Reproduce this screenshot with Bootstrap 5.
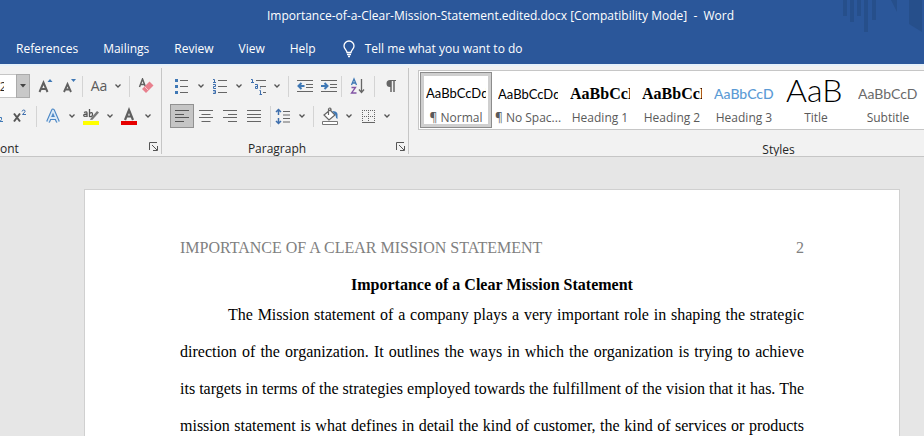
<!DOCTYPE html>
<html lang="en">
<head>
<meta charset="utf-8">
<meta name="viewport" content="width=device-width, initial-scale=1">
<title>Importance-of-a-Clear-Mission-Statement.edited.docx - Word</title>
<link href="https://cdn.jsdelivr.net/npm/bootstrap@5.3.0/dist/css/bootstrap.min.css" rel="stylesheet">
<style>
  body { font: 12px/16px "Open Sans", "Noto Sans", sans-serif; background: #e6e6e6; color: #262626; }
  button { font: inherit; color: inherit; background: none; border: 0; padding: 0; }
  svg { display: block; flex: none; fill: none; }
  .app-head { background: #2b579a; color: #fff; height: 64px; }
  .doc-title { padding: 8px 0 0 77px; height: 33px; }
  .head-art { position: absolute; top: 0; right: 0; }
  .menu-tabs { height: 31px; padding-left: 16px; gap: 25px; }
  .menu-tabs a { color: #fff; }
  .ribbon { background: #f2f2f2; height: 93px; border-top: 2px solid #e6f1fa; border-bottom: 1px solid #c6c6c6; }
  .group { border-right: 1px solid #c6c6c6; margin: 2px 0 2px; flex: none; }
  .group-font { width: 162px; }
  .group-para { width: 247px; }
  .group-styles { width: 740px; }
  .tool-row { height: 32px; }
  .tool { width: 24px; height: 24px; display: flex; align-items: center; justify-content: center; flex: none; }
  .tool.on { background: #c5c5c5; border: 1px solid #919191; }
  .split { width: 38px; height: 24px; display: flex; align-items: center; flex: none; }
  .split > span { width: 24px; display: flex; justify-content: center; }
  .case-mark { font-size: 14px; font-weight: 500; color: #5a5a5a; }
  .rule { width: 1px; height: 21px; background: #d4d4d4; flex: none; }
  .size-box { width: 24px; height: 24px; margin-left: -8px; padding: 0 12px 0 0; border: 1px solid #c6c6c6; border-right: 0; text-align: right; color: #262626; background: #fff; }
  .size-drop { width: 14px; height: 24px; background: #c8c8c8; border: 1px solid #ababab; display: flex; align-items: center; justify-content: center; }
  .caption-row { height: 22px; padding-top: 9px; }
  .launcher { position: absolute; right: 3px; top: 10px; }
  .gallery { margin: 2px 0 0 9px; height: 60px; border: 1px solid #c6c6c6; background: #fff; padding: 1px; }
  .style-cell { width: 72px; height: 56px; padding: 6px 6px 0; flex: none; text-align: left; color: #5a5a5a; }
  .style-cell.on { border: 1px solid #8c8c8c; box-shadow: inset 0 0 0 3px #cfcfcf; padding: 5px 5px 0; }
  .sample { display: flex; align-items: center; height: 27px; overflow: hidden; white-space: nowrap; color: #000; font-family: Lato, "Open Sans", sans-serif; font-size: 13px; }
  .sample.serif { font: bold 16px "Liberation Serif", serif; }
  .sample.blue { color: #5b9bd5; font-size: 14px; font-weight: 500; }
  .sample.huge { font-weight: 300; font-size: 32px; line-height: 20px; align-items: flex-start; }
  .sample.soft { color: #6a6a6a; font-size: 14px; }
  .style-name { display: block; text-align: center; white-space: nowrap; margin: 3px -4px 0; }
  .workspace { padding: 33px 25px 0 85px; }
  .sheet { background: #fff; box-shadow: 0 0 0 1px #d0d0d0; padding: 48px 95px 0; font: 16px/20px "Liberation Serif", serif; color: #000; }
  .running-head { color: #808080; margin-bottom: 17px; }
  .sheet h1 { font: bold 16px/20px "Liberation Serif", serif; margin: 0; text-align: center; }
  .sheet p { line-height: 37px; text-indent: 48px; text-align: justify; text-align-last: justify; margin: 1px 0 0; }
</style>
</head>
<body class="vh-100 overflow-hidden d-flex flex-column">
<header class="app-head position-relative flex-shrink-0">
  <svg class="head-art" width="90" height="34" viewBox="0 0 90 34">
    <g fill="#264f8b"><path d="M9 0h4v16H9zM16 0h4v22h-4zM23 0h4v16h-4zM30 0h4v32h-4zM38 0h4v20h-4zM57 0h6v12z"/><path d="M75 0h13v32L75 24z"/></g>
  </svg>
  <div class="doc-title text-center">Importance-of-a-Clear-Mission-Statement.edited.docx [Compatibility Mode]&nbsp; -&nbsp; Word</div>
  <nav class="menu-tabs d-flex align-items-center">
    <a class="text-decoration-none" href="#">References</a>
    <a class="text-decoration-none" href="#">Mailings</a>
    <a class="text-decoration-none" href="#">Review</a>
    <a class="text-decoration-none" href="#">View</a>
    <a class="text-decoration-none" href="#">Help</a>
    <a class="text-decoration-none d-flex align-items-center gap-2" href="#">
      <svg width="16" height="18" viewBox="0 0 16 18" stroke="#fff" stroke-width="1.3"><path d="M6 12.500C6 10 3 9 3 6a5 5 0 0 1 10 0c0 3-3 4-3 6.500zM6 14.500h4M7 16.500h2"/></svg>
      <span>Tell me what you want to do</span></a>
  </nav>
</header>

<section class="ribbon d-flex overflow-hidden flex-shrink-0" aria-label="Ribbon">
  <div class="group group-font">
    <div class="tool-row d-flex align-items-center pt-1">
      <input class="size-box rounded-0" type="text" value="12" aria-label="Font size">
      <button class="size-drop" aria-label="Font size list"><svg width="8" height="4" viewBox="0 0 8 4"><path d="M1 0h6L4 3.500z" fill="#444"/></svg></button>
      <button class="tool ms-1" aria-label="Grow font"><svg width="16" height="16" viewBox="0 0 16 16"><path d="M1.500 14 5.500 4.500 9.500 14M3 11h5" stroke="#606060" stroke-width="2"/><path d="M9.500 4 12 1l2.500 3z" fill="#3f78b5"/></svg></button>
      <button class="tool" aria-label="Shrink font"><svg width="16" height="16" viewBox="0 0 16 16"><path d="M2 14 5.500 6 9 14M3.500 11.500h4" stroke="#606060" stroke-width="1.900"/><path d="M9 1h5l-2.500 3z" fill="#3f78b5"/></svg></button>
      <span class="rule"></span>
      <button class="split ms-1" aria-label="Change case"><span class="case-mark">Aa</span><svg width="14" height="8" viewBox="0 0 14 8"><path d="M4.500 2.500 7 5l2.500-2.500" stroke="#555" stroke-width="1.300"/></svg></button>
      <span class="rule ms-1"></span>
      <button class="tool ms-1" aria-label="Clear formatting"><svg width="16" height="16" viewBox="0 0 16 16"><path d="M1.500 9 4.500 1l3 8M2.500 6.500h4" stroke="#606060" stroke-width="1.500"/><path d="m4 11 7.500-7.500 4 4L8 15z" fill="#e8808e"/><path d="m6.500 8.500 4 4" stroke="#f6c6cc"/></svg></button>
    </div>
    <div class="tool-row d-flex align-items-center">
      <svg width="8" height="16" viewBox="0 0 8 16"><path d="M0 9.500h1.500v2L0 13.500h3" stroke="#3f78b5"/></svg>
      <button class="tool" aria-label="Superscript"><svg width="16" height="16" viewBox="0 0 16 16"><path d="m2 5.500 6 8m0-8-6 8" stroke="#555" stroke-width="2"/><path d="M10 3.500q.3-1.500 1.800-1.500 1.700.2 1.200 1.700L10.500 6.500H14" stroke="#3f6fad"/></svg></button>
      <span class="rule ms-1"></span>
      <button class="split ms-1" aria-label="Text effects"><span><svg width="16" height="16" viewBox="0 0 16 16" stroke-linejoin="round"><path d="M3 14 8 2.500 13 14M5 10h6" stroke="#4a86c5" stroke-width="4"/><path d="M3 14 8 2.500 13 14M5 10h6" stroke="#dceaf7" stroke-width="1.800"/></svg></span><svg width="14" height="8" viewBox="0 0 14 8"><path d="M4.500 2.500 7 5l2.500-2.500" stroke="#555" stroke-width="1.300"/></svg></button>
      <button class="split" aria-label="Highlight"><span><svg width="18" height="18" viewBox="0 0 18 18"><path d="M2 5.500q3-1.500 3 .5v4M5 7q-3.500 0-3.300 1.500T5 9M7.500 2v8m0-3.500q3-2 3 .8T7.500 9.500" stroke="#555" stroke-width="1.300"/><path d="m9 11 6-7 2 1.500-6.500 7.200L8 13z" fill="#777"/><path d="M1 14h16v4H1z" fill="#ffff00"/></svg></span><svg width="14" height="8" viewBox="0 0 14 8"><path d="M4.500 2.500 7 5l2.500-2.500" stroke="#555" stroke-width="1.300"/></svg></button>
      <button class="split" aria-label="Font color"><span><svg width="18" height="18" viewBox="0 0 18 18"><path d="M5 13 9 3l4 10M6.500 9.500h5" stroke="#606060" stroke-width="2.200"/><path d="M1 14h16v4H1z" fill="#e60000"/></svg></span><svg width="14" height="8" viewBox="0 0 14 8"><path d="M4.500 2.500 7 5l2.500-2.500" stroke="#555" stroke-width="1.300"/></svg></button>
    </div>
    <div class="caption-row position-relative"><span class="d-block">ont</span>
      <button class="launcher" aria-label="Font settings"><svg width="9" height="9" viewBox="0 0 9 9" stroke="#555"><path d="M.5 8V.5H8M3 3l5 5M8.500 4v4.500H4"/></svg></button></div>
  </div>

  <div class="group group-para">
    <div class="tool-row d-flex align-items-center ps-2 pt-1">
      <button class="split" aria-label="Bullets"><span><svg width="16" height="16" viewBox="0 0 16 16"><path d="M1 1h3v3H1zM1 7h3v3H1zM1 13h3v3H1z" fill="#3f78b5"/><path d="M6 2.500h8M6 8.500h8M6 14.500h8" stroke="#666"/></svg></span><svg width="14" height="8" viewBox="0 0 14 8"><path d="M4.500 2.500 7 5l2.500-2.500" stroke="#555" stroke-width="1.300"/></svg></button>
      <button class="split" aria-label="Numbering"><span><svg width="16" height="16" viewBox="0 0 16 16"><path d="M1 1.500h1.500V4M1 4.500h3M1 6.500h2.500v2H1.500v2H4M1 12.500h2.500v3H1M1.500 14h2" stroke="#3f6fad"/><path d="M6 2.500h9M6 8.500h9M6 14.500h9" stroke="#666"/></svg></span><svg width="14" height="8" viewBox="0 0 14 8"><path d="M4.500 2.500 7 5l2.500-2.500" stroke="#555" stroke-width="1.300"/></svg></button>
      <button class="split" aria-label="Multilevel list"><span><svg width="17" height="17" viewBox="0 0 17 17"><path d="M1 1.500h1.500V4M1 4.500h3M5 6.500h2.500v4H5.500v-2h2M10.500 9.500v1M9.500 12.500h1V16M9.500 16.500h2.500" stroke="#3f6fad"/><path d="M6 2.500h10M10 8.500h6M13 14.500h3" stroke="#666"/></svg></span><svg width="14" height="8" viewBox="0 0 14 8"><path d="M4.500 2.500 7 5l2.500-2.500" stroke="#555" stroke-width="1.300"/></svg></button>
      <span class="rule ms-1"></span>
      <button class="tool ms-1" aria-label="Decrease indent"><svg width="16" height="14" viewBox="0 0 16 14"><path d="M0 1.500h16M9 5.500h7M9 8.500h7M0 12.500h16" stroke="#666"/><path d="M7.500 7h-6M4.500 4 1.500 7l3 3" stroke="#3f78b5" stroke-width="2"/></svg></button>
      <button class="tool" aria-label="Increase indent"><svg width="16" height="14" viewBox="0 0 16 14"><path d="M0 1.500h16M9 5.500h7M9 8.500h7M0 12.500h16" stroke="#666"/><path d="M0 7h6M3.500 4l3 3-3 3" stroke="#3f78b5" stroke-width="2"/></svg></button>
      <span class="rule"></span>
      <button class="tool ms-1" aria-label="Sort"><svg width="16" height="18" viewBox="0 0 16 18"><path d="m1.500 8 2.500-6 2.500 6M2.500 6h3" stroke="#3f78b5" stroke-width="1.300"/><path d="M1.500 10.500h4l-4 5.500h5" stroke="#8355a5" stroke-width="1.300"/><path d="M11.500 2v13M9 12.500l2.500 3 2.500-3" stroke="#666" stroke-width="1.300"/></svg></button>
      <span class="rule ms-1"></span>
      <button class="tool ms-1" aria-label="Show marks"><svg width="12" height="14" viewBox="0 0 12 14"><path d="M6 8H5a3.500 3.500 0 0 1 0-7h6v1H6z" fill="#666"/><path d="M6 1v12M9 1v12" stroke="#666" stroke-width="1.500"/></svg></button>
    </div>
    <div class="tool-row d-flex align-items-center ps-2">
      <button class="tool on" aria-label="Align left"><svg width="16" height="14" viewBox="0 0 16 14"><path d="M1 1.500h14M1 5.500h9M1 8.500h14M1 12.500h9" stroke="#555"/></svg></button>
      <button class="tool" aria-label="Center"><svg width="16" height="14" viewBox="0 0 16 14"><path d="M1 1.500h14M3.500 5.500h9M1 8.500h14M3.500 12.500h9" stroke="#666"/></svg></button>
      <button class="tool" aria-label="Align right"><svg width="16" height="14" viewBox="0 0 16 14"><path d="M1 1.500h14M6 5.500h9M1 8.500h14M6 12.500h9" stroke="#666"/></svg></button>
      <button class="tool" aria-label="Justify"><svg width="16" height="14" viewBox="0 0 16 14"><path d="M1 1.500h14M1 5.500h14M1 8.500h14M1 12.500h14" stroke="#666"/></svg></button>
      <span class="rule ms-1"></span>
      <button class="split" aria-label="Line spacing"><span><svg width="16" height="17" viewBox="0 0 16 17"><path d="M3.500 1v6M1 4l2.500-2.500L6 4M3.500 10v6M1 13l2.500 2.500L6 13" stroke="#3f6fad" stroke-width="1.500"/><path d="M8 3.500h7M8 7h7M8 10.500h7M8 14h7" stroke="#666"/></svg></span><svg width="14" height="8" viewBox="0 0 14 8"><path d="M4.500 2.500 7 5l2.500-2.500" stroke="#555" stroke-width="1.300"/></svg></button>
      <span class="rule ms-1"></span>
      <button class="split ms-1" aria-label="Shading"><span><svg width="18" height="18" viewBox="0 0 18 18"><path d="m3 8 6-5 5 5-6 5zM7.500 8V2q1.500-2 2.500 0v3" stroke="#666" stroke-width="1.200" fill="#fff"/><path d="M11 4q5 0 5.500 3v5q-2-1-2-4z" fill="#3f78b5"/><path d="M1.500 14.500h15v3h-15z" stroke="#777" fill="#fff"/></svg></span><svg width="14" height="8" viewBox="0 0 14 8"><path d="M4.500 2.500 7 5l2.500-2.500" stroke="#555" stroke-width="1.300"/></svg></button>
      <button class="split" aria-label="Borders"><span><svg width="15" height="15" viewBox="0 0 15 15" stroke="#666"><path d="M1 1.500h13M1 7.500h13M1.500 1v12M7.500 1v12M13.500 1v12" stroke-dasharray="1 1"/><path d="M1 13.500h13"/></svg></span><svg width="14" height="8" viewBox="0 0 14 8"><path d="M4.500 2.500 7 5l2.500-2.500" stroke="#555" stroke-width="1.300"/></svg></button>
    </div>
    <div class="caption-row position-relative text-center"><span class="pe-3 d-block">Paragraph</span>
      <button class="launcher" aria-label="Paragraph settings"><svg width="9" height="9" viewBox="0 0 9 9" stroke="#555"><path d="M.5 8V.5H8M3 3l5 5M8.500 4v4.500H4"/></svg></button></div>
  </div>

  <div class="group group-styles">
    <div class="gallery d-flex">
      <button class="style-cell on"><span class="sample">AaBbCcDd</span><span class="style-name">¶ Normal</span></button>
      <button class="style-cell"><span class="sample">AaBbCcDd</span><span class="style-name">¶ No Spac...</span></button>
      <button class="style-cell"><span class="sample serif">AaBbCcD</span><span class="style-name">Heading 1</span></button>
      <button class="style-cell"><span class="sample serif">AaBbCcD</span><span class="style-name">Heading 2</span></button>
      <button class="style-cell"><span class="sample blue">AaBbCcD</span><span class="style-name">Heading 3</span></button>
      <button class="style-cell"><span class="sample huge">AaB</span><span class="style-name">Title</span></button>
      <button class="style-cell"><span class="sample soft">AaBbCcD</span><span class="style-name">Subtitle</span></button>
    </div>
    <div class="caption-row text-center pt-2 mt-1"><span class="d-block">Styles</span></div>
  </div>
</section>

<main class="workspace d-flex flex-column flex-grow-1">
  <article class="sheet flex-grow-1">
    <div class="running-head d-flex justify-content-between"><span>IMPORTANCE OF A CLEAR MISSION STATEMENT</span><span>2</span></div>
    <h1>Importance of a Clear Mission Statement</h1>
    <p>The Mission statement of a company plays a very important role in shaping the strategic direction of the organization. It outlines the ways in which the organization is trying to achieve its targets in terms of the strategies employed towards the fulfillment of the vision that it has. The mission statement is what defines in detail the kind of customer, the kind of services or products</p>
  </article>
</main>
<script src="https://cdn.jsdelivr.net/npm/bootstrap@5.3.0/dist/js/bootstrap.bundle.min.js"></script>
</body>
</html>
